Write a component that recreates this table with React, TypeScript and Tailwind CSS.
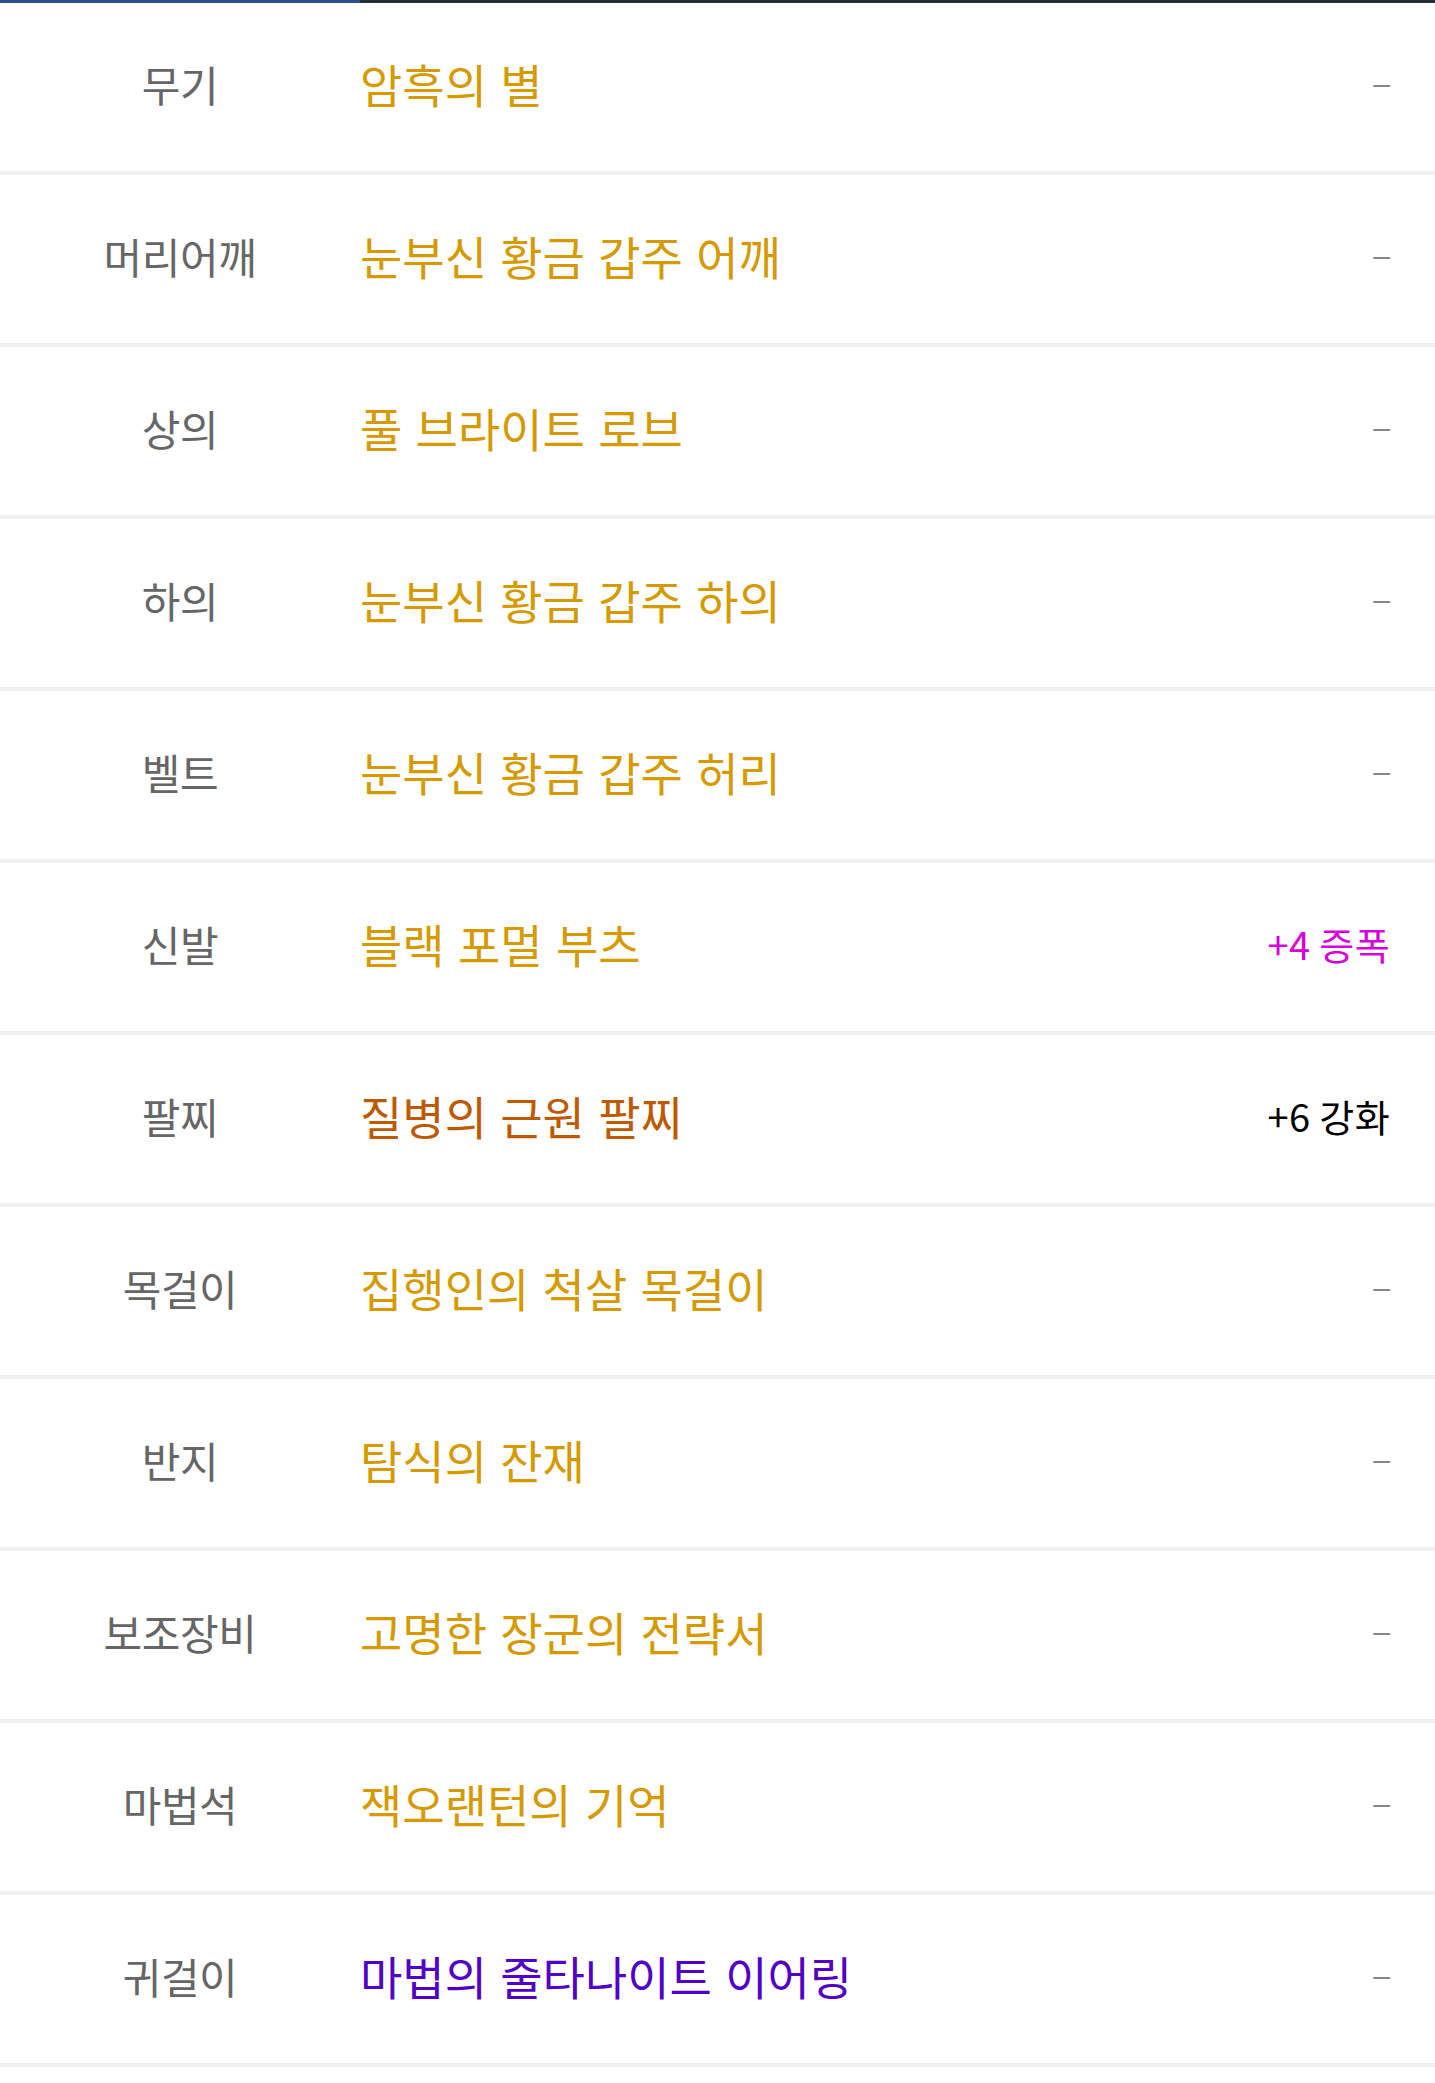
const ITEMS = [
  { slot: "무기", name: "암흑의 별", color: "text-[#d59a00]" },
  { slot: "머리어깨", name: "눈부신 황금 갑주 어깨", color: "text-[#d59a00]" },
  { slot: "상의", name: "풀 브라이트 로브", color: "text-[#d59a00]" },
  { slot: "하의", name: "눈부신 황금 갑주 하의", color: "text-[#d59a00]" },
  { slot: "벨트", name: "눈부신 황금 갑주 허리", color: "text-[#d59a00]" },
  { slot: "신발", name: "블랙 포멀 부츠", color: "text-[#d59a00]", extra: "amp" },
  { slot: "팔찌", name: "질병의 근원 팔찌", color: "text-[#bd5a00]", extra: "up" },
  { slot: "목걸이", name: "집행인의 척살 목걸이", color: "text-[#d59a00]" },
  { slot: "반지", name: "탐식의 잔재", color: "text-[#d59a00]" },
  { slot: "보조장비", name: "고명한 장군의 전략서", color: "text-[#d59a00]" },
  { slot: "마법석", name: "잭오랜턴의 기억", color: "text-[#d59a00]" },
  { slot: "귀걸이", name: "마법의 줄타나이트 이어링", color: "text-[#5200c6]" },
];

const Extra = ({ kind }: { kind?: string }) => {
  if (kind === "amp")
    return <span className="text-[38px] text-[#d600d8] tracking-[0.01em]">+4 증폭</span>;
  if (kind === "up")
    return <span className="text-[38px] text-black tracking-[0.01em]">+6 강화</span>;
  return <span className="text-[30px] text-[#888] font-['Liberation_Sans']">–</span>;
};

export default function App() {
  return (
    <div className="min-h-[2083px] w-full bg-white font-['Noto_Sans_CJK_KR',sans-serif]">
      <div className="flex h-[3px]">
        <div className="w-[360px] bg-[#2d4e8e]" />
        <div className="flex-1 bg-[#2a2e38]" />
      </div>
      {ITEMS.map((it) => (
        <div
          key={it.slot}
          className="flex h-[172px] items-center border-b-4 border-[#f0f0f0] pr-[45px] pb-[8px]"
        >
          <div className="w-[360px] text-center text-[42px] text-[#666] tracking-[-0.01em]">
            {it.slot}
          </div>
          <div className={`flex-1 text-[46px] tracking-normal [word-spacing:3px] ${it.color}`}>
            {it.name}
          </div>
          <Extra kind={it.extra} />
        </div>
      ))}
    </div>
  );
}
